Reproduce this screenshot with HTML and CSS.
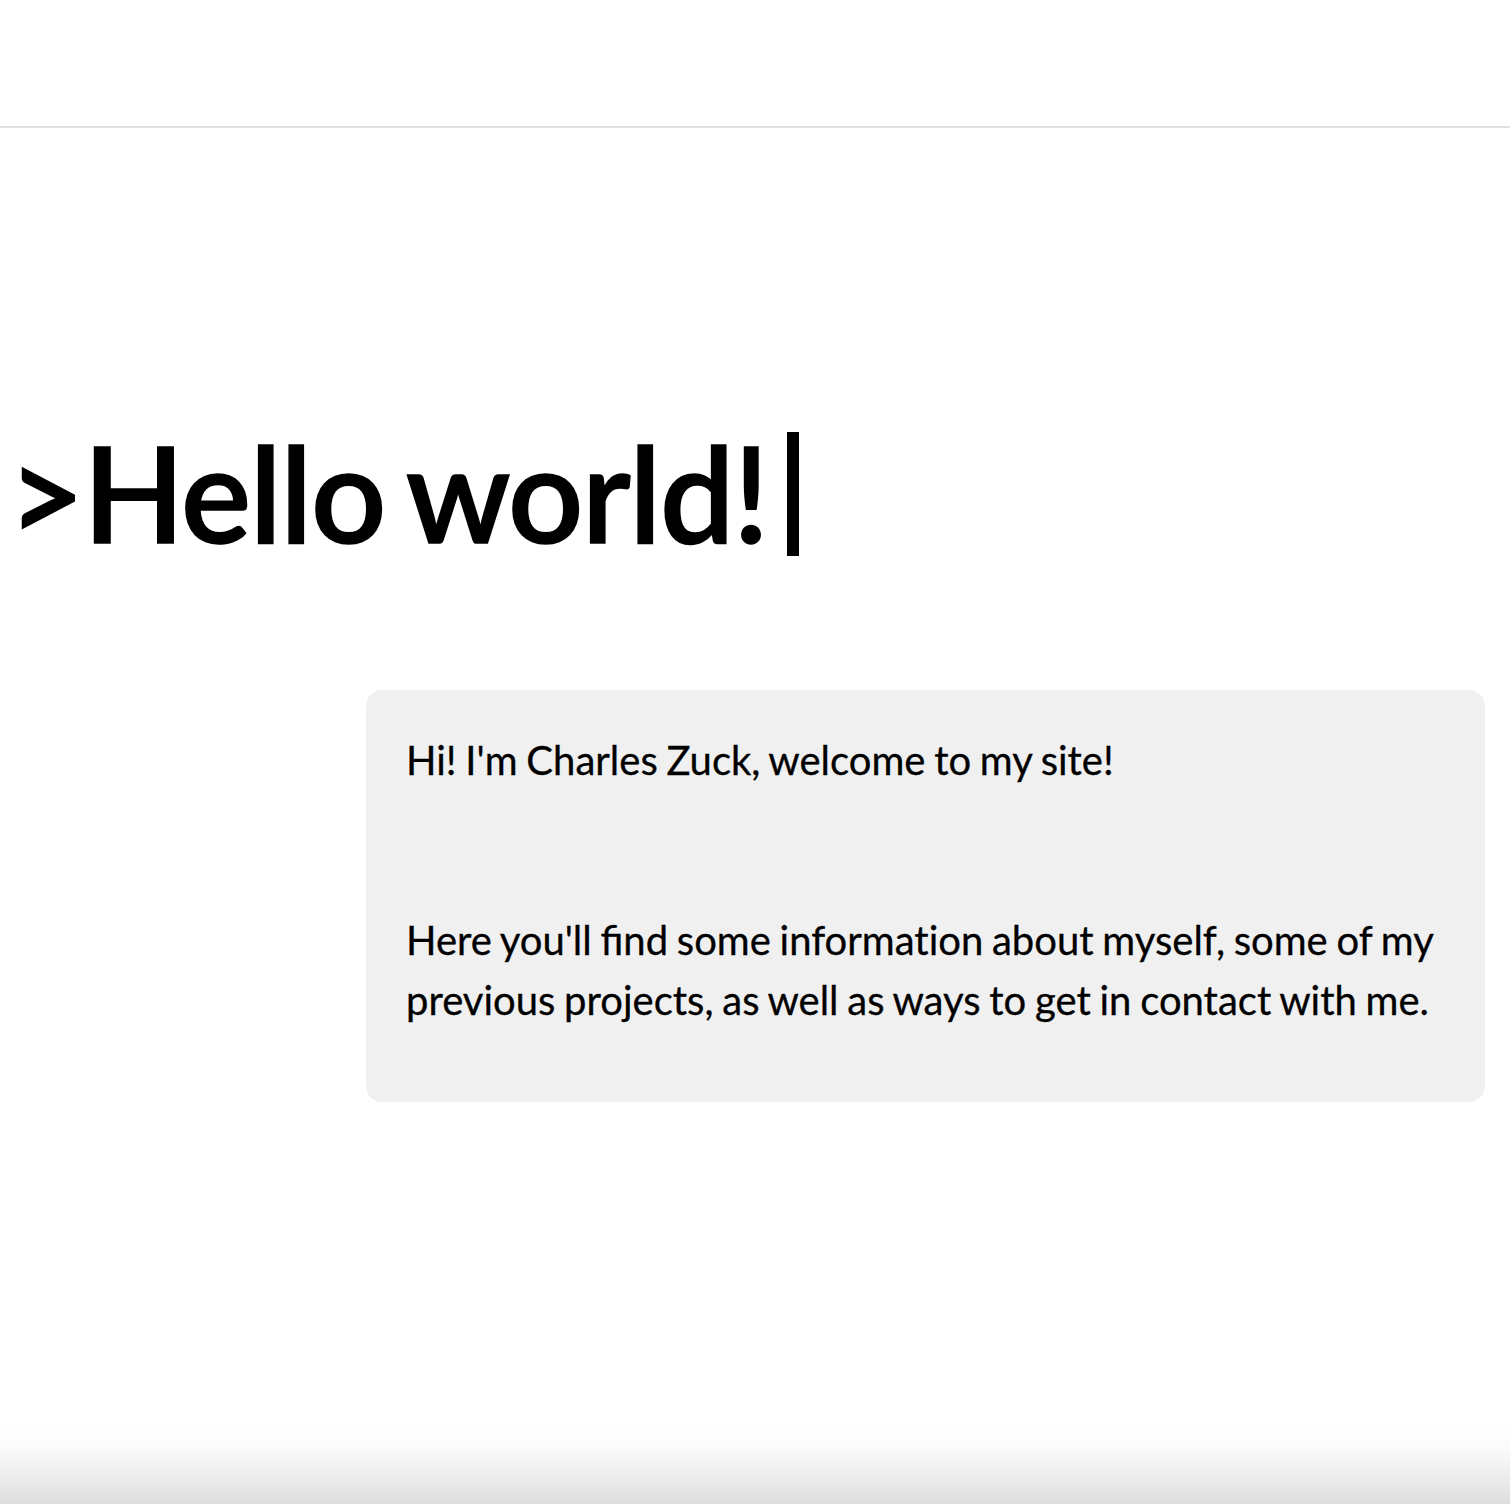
FILE: index.html
```html
<!DOCTYPE html>
<html lang="en">
<head>
<meta charset="utf-8">
<title>Charles Zuck</title>
<link rel="stylesheet" href="styles.css">
</head>
<body>
<div class="page">
  <header class="topbar"></header>
  <main class="main">
    <h1 class="hero">&gt;Hello world!<span class="caret"></span></h1>
    <section class="intro">
      <p class="intro-line intro-first">Hi! I'm Charles Zuck, welcome to my site!</p>
      <p class="intro-line">Here you'll find some informat&zwnj;ion about myself, some of my previous projects, as well as ways to get in contact with me.</p>
    </section>
  </main>
</div>
</body>
</html>
```

FILE: styles.css
```css
html, body {
  margin: 0;
  padding: 0;
}

body {
  font-family: Lato, "Open Sans", sans-serif;
  color: #000;
  background: #fff;
}

.page {
  min-height: 100vh;
  display: flex;
  flex-direction: column;
  background: linear-gradient(to bottom, #ffffff 0, #ffffff calc(100% - 80px), #fbfbfb calc(100% - 56px), #dedede 100%);
}

.topbar {
  height: 126px;
  border-bottom: 2px solid #dfe0e4;
  background: #fff;
}

.main {
  display: flex;
  flex-direction: column;
  padding-top: 285px;
}

.hero {
  margin: 0;
  padding-left: 8px;
  font-size: 132px;
  font-weight: 600;
  line-height: 1.2;
  letter-spacing: -1.4px;
  word-spacing: -8px;
  -webkit-text-stroke: 1.5px #000;
  display: flex;
  align-items: flex-start;
}

.caret {
  display: inline-block;
  width: 12px;
  height: 124px;
  background: #000;
  margin-left: 19px;
  margin-top: 19px;
}

.intro {
  margin: 119px 25px 0 366px;
  background: #f0f0f0;
  border-radius: 16px;
  padding: 40px 40px 72px;
}

.intro-line {
  margin: 0;
  font-size: 40px;
  line-height: 60px;
  word-spacing: -1.5px;
  -webkit-text-stroke: 0.3px #000;
}

.intro-first {
  margin-bottom: 120px;
}
```
